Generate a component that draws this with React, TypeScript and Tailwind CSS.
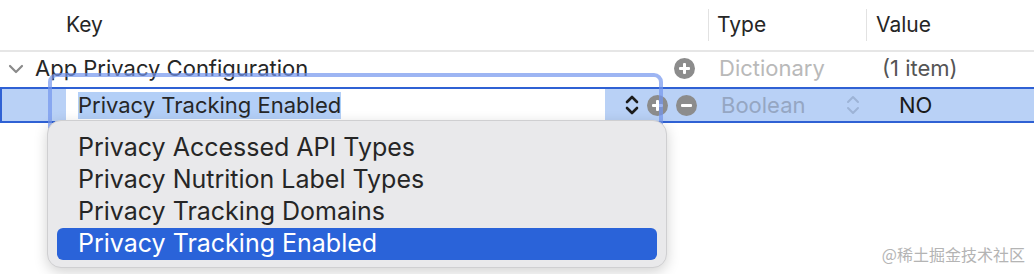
import React from "react";

const font = { fontFamily: "Inter, 'Noto Sans', 'Noto Sans CJK SC', sans-serif" };

function CircleIcon({ kind, className }: { kind: "plus" | "minus"; className?: string }) {
  return (
    <svg width="21" height="21" viewBox="0 0 21 21" className={className}>
      <circle cx="10.5" cy="10.5" r="10.5" fill="#8c8c8c" />
      <rect x="5" y="9" width="11" height="3" rx="1" fill="#ffffff" />
      {kind === "plus" && <rect x="9" y="5" width="3" height="11" rx="1" fill="#ffffff" />}
    </svg>
  );
}

function Stepper({ color, width = 2.6 }: { color: string; width?: number }) {
  return (
    <svg width="16" height="24" viewBox="0 0 16 24">
      <path d="M3 9 L8 4 L13 9" fill="none" stroke={color} strokeWidth={width} strokeLinecap="round" strokeLinejoin="round" />
      <path d="M3 15 L8 20 L13 15" fill="none" stroke={color} strokeWidth={width} strokeLinecap="round" strokeLinejoin="round" />
    </svg>
  );
}

export default function App() {
  const items = [
    "Privacy Accessed API Types",
    "Privacy Nutrition Label Types",
    "Privacy Tracking Domains",
    "Privacy Tracking Enabled",
  ];
  return (
    <div className="relative w-[1034px] h-[274px] bg-white overflow-hidden text-[#262626]" style={font}>
      {/* Header */}
      <div className="flex items-center h-[52px] border-b-2 border-[#e6e6e6] text-[21px]">
        <div className="w-[708px] pl-[66px]">Key</div>
        <div className="w-px h-[32px] bg-[#e2e2e2]" />
        <div className="w-[157px] pl-[8px]">Type</div>
        <div className="w-px h-[32px] bg-[#e2e2e2]" />
        <div className="pl-[9px]">Value</div>
      </div>

      {/* Row 1 */}
      <div className="flex items-center h-[35px] pb-[2px] text-[22px]">
        <div className="w-[35px] flex justify-center pr-[4px]">
          <svg width="16" height="10" viewBox="0 0 16 10">
            <path d="M2 2 L8 8 L14 2" fill="none" stroke="#8a8a8a" strokeWidth="2.2" strokeLinecap="round" strokeLinejoin="round" />
          </svg>
        </div>
        <div className="w-[639px]">App Privacy Configuration</div>
        <CircleIcon kind="plus" />
        <div className="w-[24px]" />
        <div className="w-[163px] text-[#b9b9b9]">Dictionary</div>
        <div className="text-[#555555]">(1 item)</div>
      </div>

      {/* Row 2 (selected) */}
      <div className="flex items-center h-[36px] bg-[#b9d1f6] border-y-2 border-l-2 border-[#2f61d4] text-[22px]">
        <div className="w-[64px]" />
        <div className="w-[539px] h-full bg-white flex items-center pl-[12px]">
          <span className="bg-[#b3cff7] leading-[27px]">Privacy Tracking Enabled</span>
        </div>
        <div className="w-[19px]" />
        <Stepper color="#1c1c1c" />
        <div className="w-[7px]" />
        <CircleIcon kind="plus" />
        <div className="w-[8px]" />
        <CircleIcon kind="minus" />
        <div className="w-[24px]" />
        <div className="w-[124px] text-[#95a6c2]">Boolean</div>
        <Stepper color="#9db3d6" width={2} />
        <div className="w-[38px]" />
        <div className="text-[#1a1a1a]">NO</div>
      </div>

      {/* Focus ring */}
      <div className="absolute left-[48px] top-[73px] w-[615px] h-[70px] rounded-[9px] border-[4px] border-[#7396ee]/70" />

      {/* Dropdown menu */}
      <div className="absolute left-[47px] top-[120px] w-[620px] h-[148px] rounded-[14px] bg-[#e9e9eb] border border-[#cfcfd1] shadow-[0_4px_14px_rgba(0,0,0,0.18)] px-[9px] pt-[11px] text-[25px] text-[#262626]">
        {items.map((t, i) => (
          <div
            key={t}
            className={
              i === 3
                ? "h-[32px] flex items-center pl-[21px] rounded-[6px] bg-[#2a63d9] text-white"
                : "h-[32px] flex items-center pl-[21px]"
            }
          >
            {t}
          </div>
        ))}
      </div>

      {/* Watermark */}
      <div
        className="absolute right-[9px] bottom-[8px] text-[16px] text-[#b4b4b4]"
        style={{ fontFamily: "'Noto Sans CJK SC', sans-serif" }}
      >
        @稀土掘金技术社区
      </div>
    </div>
  );
}
